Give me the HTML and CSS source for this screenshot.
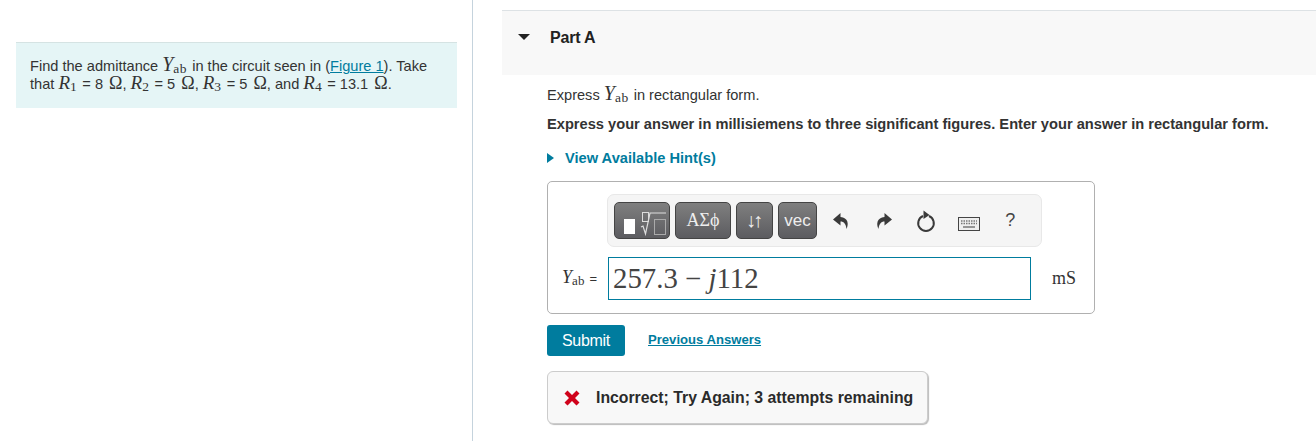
FILE: index.html
```html
<!DOCTYPE html>
<html lang="en">
<head>
    <meta charset="UTF-8">
    <meta name="viewport" content="width=device-width, initial-scale=1.0">
    <title>Part A</title>
    <link rel="stylesheet" href="styles.css">
</head>
<body>
    <div class="left-col">
        <div class="intro">
            Find the admittance <span class="math big">Y<sub>ab</sub></span> in the circuit seen in (<a href="#">Figure 1</a>). Take<br>
            that <span class="math">R<sub>1</sub></span> = 8 <span class="ohm">&Omega;</span>, <span class="math">R<sub>2</sub></span> = 5 <span class="ohm">&Omega;</span>, <span class="math">R<sub>3</sub></span> = 5 <span class="ohm">&Omega;</span>, and <span class="math">R<sub>4</sub></span> = 13.1 <span class="ohm">&Omega;</span>.
        </div>
    </div>
    <div class="right-col">
        <div class="part-head">
            <span class="arrow-down"></span>
            <span class="part-title">Part A</span>
        </div>
        <div class="part-body">
            <p class="prompt">Express <span class="math big">Y<sub>ab</sub></span> in rectangular form.</p>
            <p class="instructions">Express your answer in millisiemens to three significant figures. Enter your answer in rectangular form.</p>
            <div class="hints"><span class="arrow-right"></span><a href="#">View Available Hint(s)</a></div>

            <div class="answer-box">
                <div class="toolbar">
                    <div class="tool-btn tool-templates">
                        <span class="solid-box"></span>
                        <svg width="30" height="35" viewBox="0 0 30 35">
                            <rect x="4.500" y="9.500" width="6" height="9" fill="none" stroke="#ddd" stroke-width="1"/>
                            <path d="M3 24l2-1 2.500 8 4.500-21h16" fill="none" stroke="#ddd" stroke-width="1.200"/>
                            <rect x="16.500" y="16.500" width="11" height="15" fill="none" stroke="#aaa" stroke-width="1"/>
                        </svg>
                    </div>
                    <div class="tool-btn tool-greek">&Alpha;&Sigma;&#981;</div>
                    <div class="tool-btn tool-arrows">&darr;&uarr;</div>
                    <div class="tool-btn tool-vec">vec</div>
                    <div class="tool-icons">
                        <span class="slot">
                            <svg width="16" height="16" viewBox="0 0 16 16"><path d="M7.500 0L0 6.500 7.500 12.500V8.500c3.500 0 5.500 2.500 6 7.500 2.500-5 1.500-11.500-6-12z" fill="#3a3a3a"/></svg>
                        </span>
                        <span class="slot">
                            <svg width="16" height="16" viewBox="0 0 16 16"><path d="M8.500 0L16 6.500 8.500 12.500V8.500c-3.500 0-5.500 2.500-6 7.500C0 11 1 4.500 8.500 4z" fill="#3a3a3a"/></svg>
                        </span>
                        <span class="slot">
                            <svg width="20" height="22" viewBox="0 0 20 22"><path d="M13 6a7.800 7.800 0 1 1-6 0" fill="none" stroke="#3a3a3a" stroke-width="2"/><path d="M7.500 0.500l6 4.500-6 4z" fill="#3a3a3a"/></svg>
                        </span>
                        <span class="slot slot-keyboard">
                            <svg width="22" height="14" viewBox="0 0 22 14"><rect x="0.500" y="0.500" width="21" height="13" fill="#eee" stroke="#444"/><path d="M3 4h16M3 6.500h16" stroke="#777" stroke-width="1.500" stroke-dasharray="1.500 1"/><path d="M5 10h12" stroke="#777" stroke-width="1.500"/></svg>
                        </span>
                        <span class="slot help">?</span>
                    </div>
                </div>
                <div class="answer-row">
                    <span class="answer-label"><span class="math">Y<sub>ab</sub></span> =</span>
                    <div class="answer-input">257.3 &minus; <i>j</i>112</div>
                    <span class="answer-unit">mS</span>
                </div>
            </div>

            <div class="actions">
                <button class="submit-btn">Submit</button>
                <a href="#" class="prev-link">Previous Answers</a>
            </div>

            <div class="feedback">
                <svg width="16" height="16" viewBox="0 0 16 16"><path d="M3.500 0.500L8 5l4.500-4.500 3 3L11 8l4.500 4.500-3 3L8 11l-4.500 4.500-3-3L5 8 0.500 3.500z" fill="#d0021b"/></svg>
                <span>Incorrect; Try Again; 3 attempts remaining</span>
            </div>
        </div>
    </div>
</body>
</html>
```

FILE: styles.css
```css
html, body {
    height: 100%;
}
body {
    font-family: "Liberation Sans", Arial, sans-serif;
    font-size: 14.6px;
    color: #333;
    background-color: #fff;
    margin: 0;
    display: flex;
    overflow: hidden;
}
a {
    color: #007c9e;
}
.left-col {
    width: 473px;
    height: 441px;
    flex: none;
    box-sizing: border-box;
    border-right: 1px solid #c5d3dd;
    padding: 42px 15px 0 16px;
}
.intro {
    background-color: #e5f5f6;
    border-top: 1px solid #d5e3e3;
    height: 66px;
    padding: 14px 14px 0;
    box-sizing: border-box;
    line-height: 18px;
}
.math {
    font-family: "Liberation Serif", "Times New Roman", serif;
    font-style: italic;
    font-size: 19px;
    line-height: 0;
}
.math.big {
    font-size: 20px;
}
.math sub {
    font-style: normal;
    font-size: 13.5px;
    line-height: 0;
    vertical-align: -2px;
    letter-spacing: 0.5px;
    margin-right: 1px;
}
.ohm {
    font-family: "Liberation Serif", "Times New Roman", serif;
    font-size: 18px;
    line-height: 0;
    margin-left: 2px;
}
.right-col {
    flex: 1;
    padding: 10px 0 0 29px;
}
.part-head {
    background-color: #f8f8f8;
    border-top: 1px solid #dde2e5;
    height: 65px;
    box-sizing: border-box;
    display: flex;
    align-items: flex-start;
    padding: 18px 0 0 16px;
}
.arrow-down {
    width: 0;
    height: 0;
    border-left: 6px solid transparent;
    border-right: 6px solid transparent;
    border-top: 6px solid #222;
    margin-top: 5px;
}
.part-title {
    font-weight: bold;
    font-size: 16px;
    margin-left: 20px;
    letter-spacing: -0.2px;
    color: #222;
}
.part-body {
    padding: 9px 0 0 45px;
}
.prompt {
    margin: 0;
    line-height: 22px;
}
.instructions {
    margin: 8px 0 0;
    font-weight: bold;
    font-size: 14.65px;
    line-height: 20px;
}
.hints {
    margin-top: 14px;
    display: flex;
    align-items: center;
    font-weight: bold;
    font-size: 14.65px;
    line-height: 20px;
}
.hints a {
    text-decoration: none;
}
.arrow-right {
    width: 0;
    height: 0;
    border-top: 5.5px solid transparent;
    border-bottom: 5.5px solid transparent;
    border-left: 7px solid #007c9e;
    margin-right: 11px;
}
.answer-box {
    width: 548px;
    height: 133px;
    margin-top: 13px;
    box-sizing: border-box;
    border: 1px solid #b0b0b0;
    border-radius: 5px;
    padding-top: 12px;
}
.toolbar {
    width: 435px;
    height: 53px;
    margin-left: 59px;
    box-sizing: border-box;
    background-color: #f5f5f5;
    border: 1px solid #e8e8e8;
    border-radius: 7px;
    display: flex;
    align-items: center;
    padding-left: 6px;
    gap: 5px;
}
.tool-btn {
    height: 37px;
    box-sizing: border-box;
    background: linear-gradient(#7f7f7f, #5c5c60);
    border: 1px solid #444;
    border-radius: 5px;
    color: #eee;
    display: flex;
    align-items: center;
    justify-content: center;
}
.tool-templates {
    width: 56px;
    padding-left: 9px;
    justify-content: flex-start;
    gap: 3px;
}
.solid-box {
    width: 11px;
    height: 15px;
    background-color: #fff;
    margin-top: 11px;
}
.tool-greek {
    width: 56px;
    font-family: "Liberation Serif", serif;
    font-size: 18px;
}
.tool-arrows {
    width: 37px;
    font-size: 20px;
    letter-spacing: -3px;
    padding-right: 3px;
}
.tool-vec {
    width: 39px;
    font-size: 17px;
}
.tool-icons {
    display: flex;
    align-items: center;
    margin-left: -2px;
}
.slot {
    width: 42.5px;
    display: flex;
    justify-content: center;
}
.slot svg {
    display: block;
}
.slot-keyboard {
    margin-top: 6px;
}
.help {
    font-size: 18px;
    color: #444;
    margin-left: -1px;
}
.answer-row {
    display: flex;
    align-items: center;
    margin-top: 10px;
}
.answer-label {
    width: 60px;
    text-align: right;
    font-size: 13px;
    box-sizing: border-box;
    padding-right: 11px;
    white-space: nowrap;
}
.answer-label .math {
    font-size: 18px;
}
.answer-label .math sub {
    font-size: 13px;
    letter-spacing: 0.3px;
}
.answer-input {
    width: 423px;
    height: 43px;
    box-sizing: border-box;
    border: 1px solid #007c9e;
    padding-left: 4px;
    font-family: "Liberation Serif", serif;
    font-size: 28.8px;
    line-height: 41px;
    color: #444;
}
.answer-unit {
    font-family: "Liberation Serif", serif;
    font-size: 18px;
    margin-left: 21px;
}
.actions {
    display: flex;
    align-items: center;
    margin-top: 11px;
}
.submit-btn {
    width: 78px;
    height: 31px;
    background-color: #007c9e;
    border: none;
    border-radius: 3px;
    color: #fff;
    font-family: inherit;
    font-size: 16px;
    letter-spacing: -0.3px;
    padding: 0;
}
.prev-link {
    margin-left: 23px;
    margin-bottom: 2px;
    font-size: 13.1px;
    font-weight: bold;
}
.feedback {
    width: 381px;
    height: 53px;
    margin-top: 15px;
    box-sizing: border-box;
    background-color: #f8f8f8;
    border: 1px solid #ccc;
    border-radius: 6px;
    box-shadow: 1px 1px 1px #bbb;
    display: flex;
    align-items: center;
    padding: 1px 0 0 16px;
    font-weight: bold;
    font-size: 15.8px;
    color: #2a2a2a;
}
.feedback span {
    margin-left: 16px;
}
```
